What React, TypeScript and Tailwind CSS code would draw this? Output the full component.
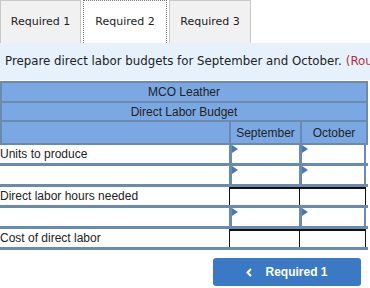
export default function App() {
  const tab = 'h-[43px] flex items-center justify-center text-[11px] text-[#222] border border-[#c8c8c8] border-b-0'
  const arrow = 'absolute left-0 top-0 w-0 h-0 border-t-[4px] border-b-[4px] border-l-[6px] border-t-transparent border-b-transparent border-l-[#4a78b0]'

  const rows = [
    { label: 'Units to produce', kind: 'tri' },
    { label: '', kind: 'tri' },
    { label: 'Direct labor hours needed', kind: 'plain' },
    { label: '', kind: 'tri' },
    { label: 'Cost of direct labor', kind: 'plain' },
  ]

  return (
    <div className="w-[370px] h-[288px] bg-white overflow-hidden" style={{ fontFamily: 'Tahoma, "DejaVu Sans", sans-serif' }}>
      {/* tabs */}
      <div className="flex gap-[2px]">
        <div className={`${tab} w-[81px] bg-[#f1f1f1]`}>Required 1</div>
        <div className="h-[43px] w-[84px] flex items-center justify-center text-[11px] text-[#222] bg-white border border-dotted border-[#777] border-b-0">Required 2</div>
        <div className={`${tab} w-[82px] bg-[#f1f1f1]`}>Required 3</div>
      </div>

      {/* instructions */}
      <div className="h-[37px] bg-[#e6f1fb] flex items-center pl-[5px] text-[11.8px] whitespace-nowrap text-[#222]">
        Prepare direct labor budgets for September and October. <span className="text-[#b5323c] ml-1">(Round your answers to the nearest whole number.)</span>
      </div>

      {/* table */}
      <div className="mt-[1px] w-[368px] text-[12px] text-[#222]" style={{ fontFamily: '"Liberation Sans", Arial, sans-serif' }}>
        <div className="bg-[#7ba8e2] border-[2px] border-[#6b8ab0]">
          <div className="h-[20px] flex items-center justify-center border-b-[2px] border-[#6b8ab0]">MCO Leather</div>
          <div className="h-[19px] flex items-center justify-center border-b-[2px] border-[#6b8ab0]">Direct Labor Budget</div>
          <div className="h-[21px] flex">
            <div className="w-[227px]" />
            <div className="w-[71px] flex items-center justify-center border-l-[2px] border-[#6b8ab0]">September</div>
            <div className="flex-1 flex items-center justify-center border-l-[2px] border-[#6b8ab0]">October</div>
          </div>
        </div>

        {rows.map((r, i) => (
          <div key={i} className="h-[21px] flex border-b-[3px] border-[#6b8ab0]">
            <div className="w-[229px] flex items-center whitespace-nowrap">{r.label}</div>
            {r.kind === 'tri' ? (
              <>
                <div className="relative w-[71px] border-l-[3px] border-r-[1px] border-[#6b8ab0] bg-white">
                  <span className={arrow} />
                </div>
                <div className="relative w-[66px] border-l-[2px] border-r-[2px] border-[#6b8ab0] bg-white">
                  <span className={arrow} />
                </div>
              </>
            ) : (
              <>
                <div className="w-[71px] border-l border-r border-t-[2px] border-[#111] bg-white" />
                <div className="w-[66px] border-r border-t-[2px] border-[#111] bg-white" />
              </>
            )}
          </div>
        ))}
      </div>

      {/* nav button */}
      <div className="flex justify-end pr-[9px] mt-[8px]">
        <button className="w-[148px] h-[28px] rounded-[3px] bg-[#3b79c4] text-white font-bold text-[12px] flex items-center justify-center gap-[13px]" style={{ fontFamily: '"Liberation Sans", Arial, sans-serif' }}>
          <svg width="6" height="9" viewBox="0 0 6 9" fill="none">
            <path d="M5 1L1.5 4.5L5 8" stroke="white" strokeWidth="2" />
          </svg>
          Required 1
        </button>
      </div>
    </div>
  )
}
